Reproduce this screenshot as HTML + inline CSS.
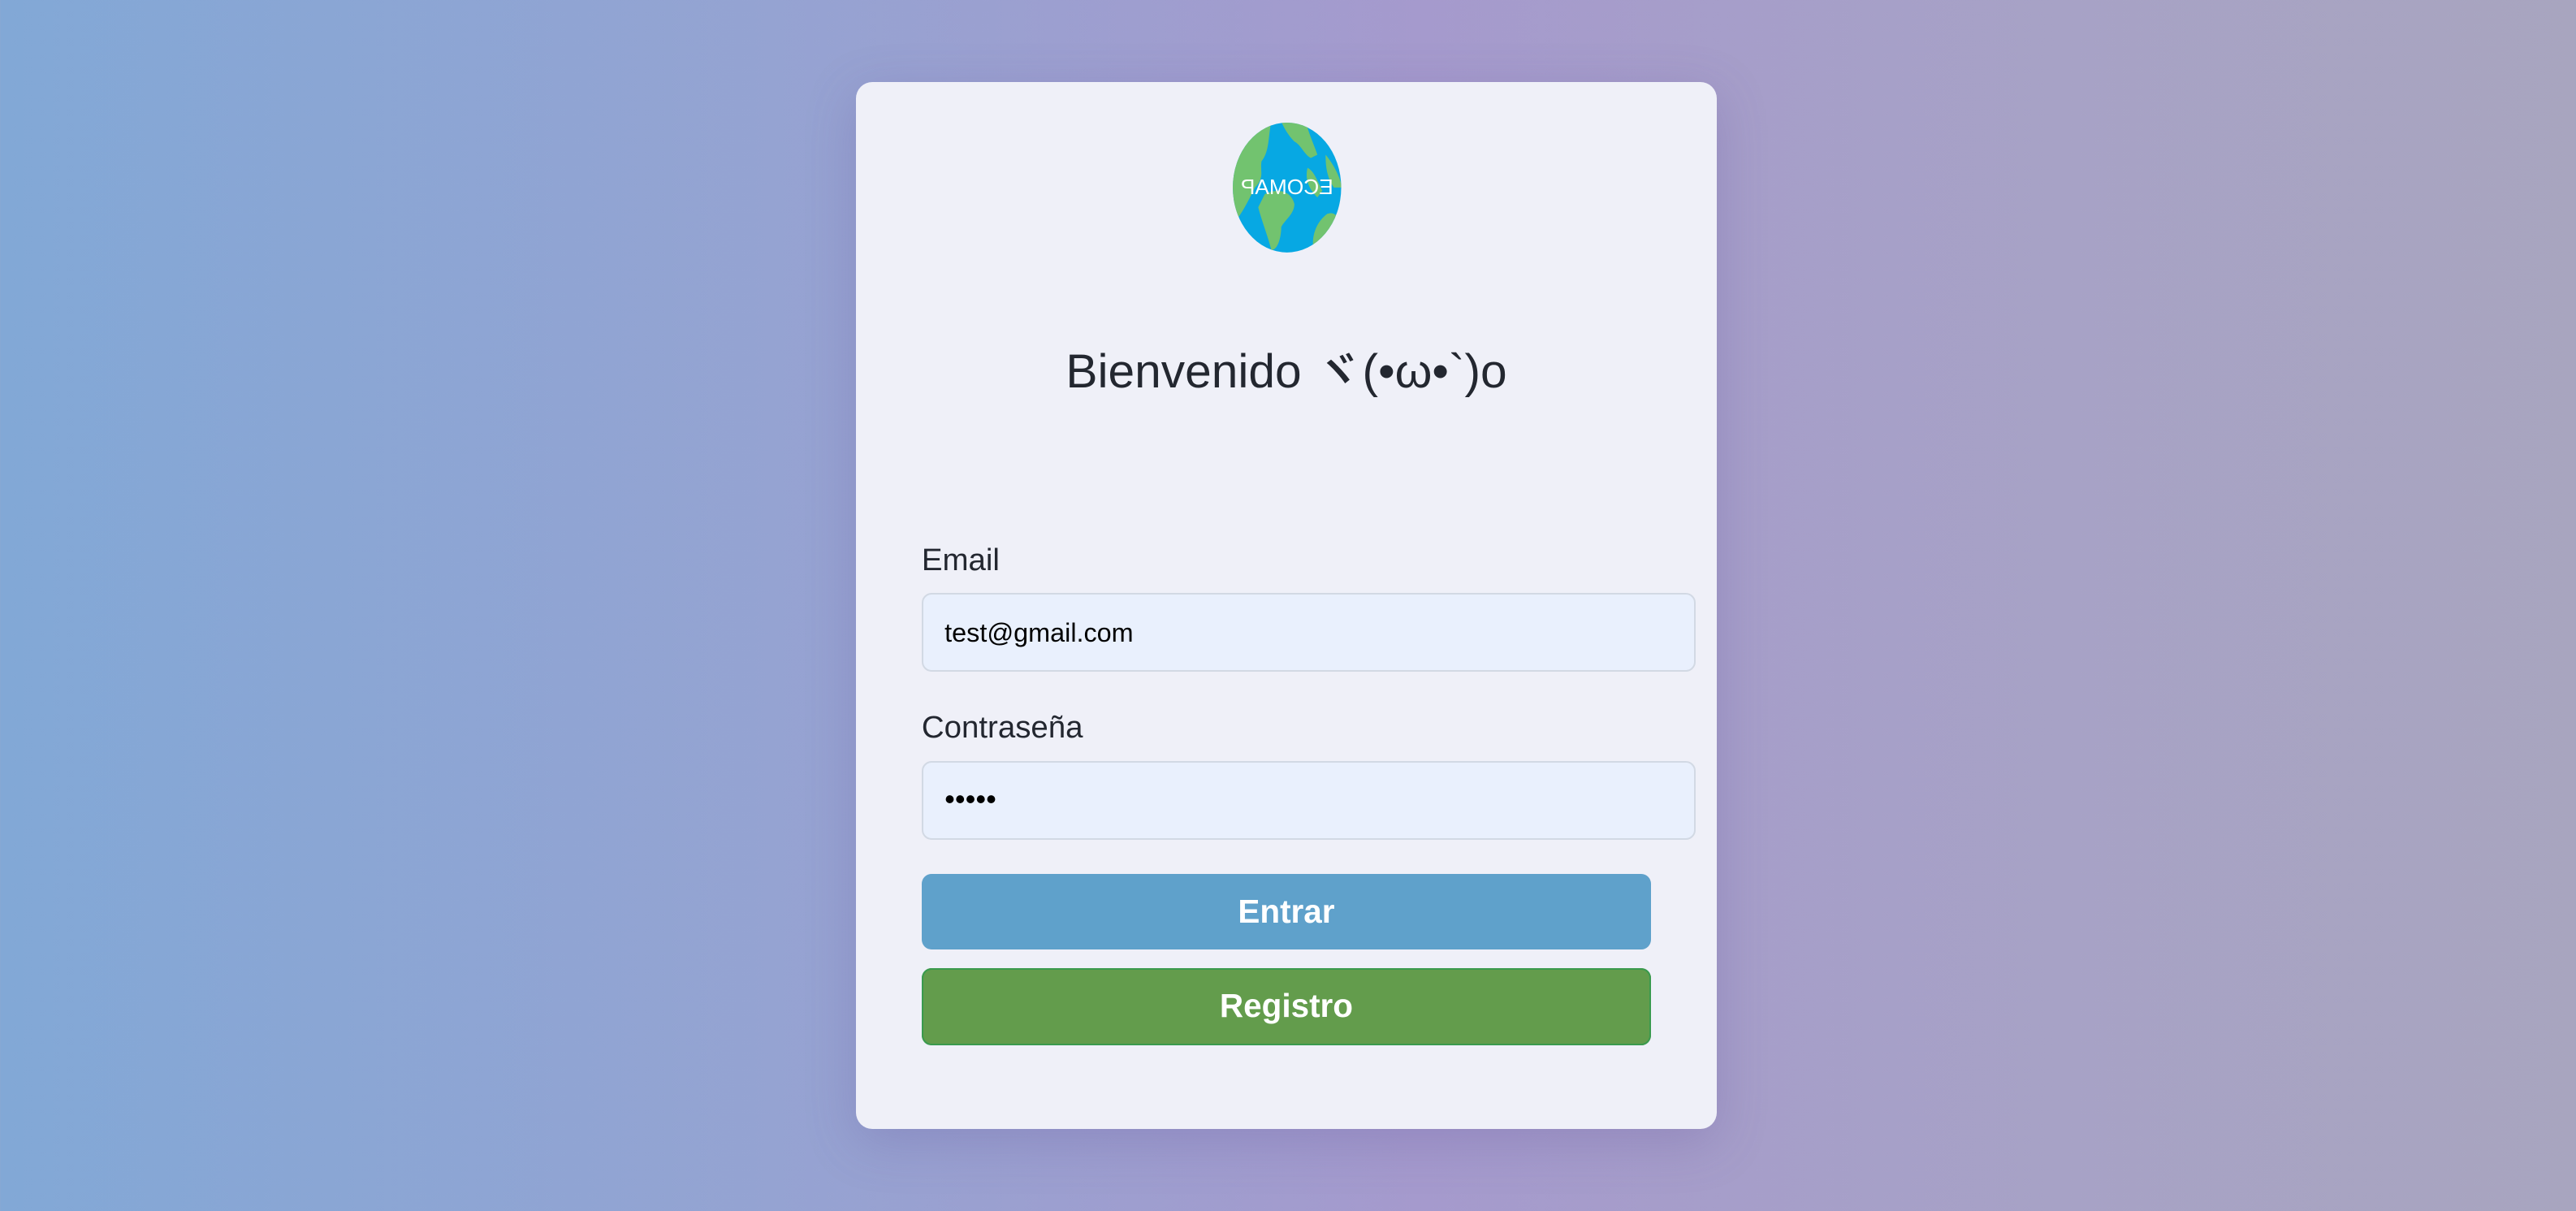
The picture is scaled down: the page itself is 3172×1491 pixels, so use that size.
<!DOCTYPE html>
<html><head><meta charset="utf-8"><style>
html,body{margin:0;padding:0;}
body{width:3172px;height:1490px;overflow:hidden;background:linear-gradient(90deg,#82a8d6 0%,#95a3d2 30%,#a59acd 55%,#a7a2c6 80%,#a8a5bf 100%);font-family:"Liberation Sans","Noto Sans CJK JP",sans-serif;}
#z{zoom:2.023;position:relative;width:1568px;height:737px;}
.card{position:absolute;left:521px;top:50px;width:524px;height:637px;background:#eff0f8;border-radius:10px;box-shadow:0 8px 30px rgba(90,80,150,.25);}
.globe{position:absolute;left:229px;top:24px;width:67px;height:80px;}
h1{position:absolute;left:0;right:0;top:152px;margin:0;text-align:center;font-weight:500;font-size:29px;color:#232730;}
.lbl{position:absolute;left:40px;font-size:19px;color:#232730;}
.in{position:absolute;left:40px;width:469px;height:46px;border:1px solid #d2d9e4;border-radius:6px;background:#e9f0fd;font-size:16px;color:#000;box-sizing:content-box;}
.in span{position:absolute;left:13px;top:14px;}
.btn{position:absolute;left:40px;width:444px;height:46px;border-radius:6px;color:#fff;font-weight:bold;font-size:20px;text-align:center;line-height:46px;}
</style></head><body><div id="z">
<div class="card">
<svg class="globe" viewBox="0 0 67 80">
<defs><clipPath id="c"><ellipse cx="33.5" cy="40" rx="33" ry="39.5"/></clipPath></defs>
<ellipse cx="33.5" cy="40" rx="33" ry="39.5" fill="#07a8e3"/>
<g clip-path="url(#c)" fill="#72c36f">
<path d="M0 0 H24 C22 8 23 18 18 24 C17 30 20 34 14 40 C10 48 8 52 4 58 L0 60Z"/>
<path d="M30 0 H45 C47 8 50 14 52 20 L48 22 C44 20 42 14 38 12 C34 8 32 4 30 0Z"/>
<path d="M46 28 C50 30 52 36 55 42 L52 46 C48 42 44 36 46 28Z"/>
<path d="M57 20 C62 26 66 34 67 40 L62 40 C58 34 57 28 57 20Z"/>
<path d="M20 44 C28 40 36 42 38 50 C38 56 32 60 30 64 C30 70 28 78 24 78 C22 70 18 60 16 52Z"/>
<path d="M58 56 C64 54 66 60 64 66 C60 74 54 80 50 80 C48 72 50 62 58 56Z"/>
</g>
<text x="33.5" y="44" text-anchor="middle" font-size="13" fill="#fff" font-family="Liberation Sans,sans-serif" transform="translate(67 0) scale(-1 1)">ECOMAP</text>
</svg>
<h1>Bienvenido ヾ(•ω•`)o</h1>
<div class="lbl" style="top:280px">Email</div>
<div class="in" style="top:311px"><span>test@gmail.com</span></div>
<div class="lbl" style="top:382px">Contraseña</div>
<div class="in" style="top:413px"><span style="font-size:18px;top:12px">•••••</span></div>
<div class="btn" style="top:482px;background:#5fa1cb">Entrar</div>
<div class="btn" style="top:539px;height:47px;line-height:46px;background:#639c4c;box-shadow:inset 0 0 0 1px #3a9a4e">Registro</div>
</div>
</div></body></html>
